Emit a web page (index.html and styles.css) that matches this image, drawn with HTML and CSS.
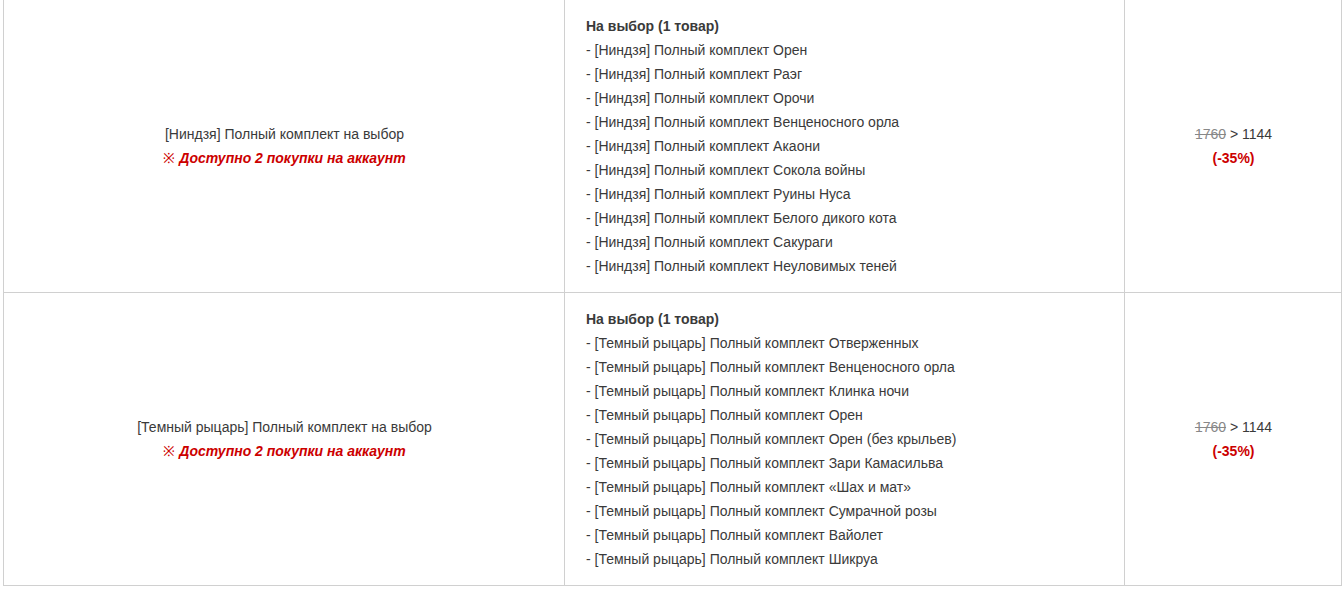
FILE: index.html
```html
<!DOCTYPE html>
<html lang="ru">
<head>
<meta charset="utf-8">
<link rel="stylesheet" href="styles.css">
</head>
<body>
<table class="goods">
  <colgroup>
    <col class="c-name">
    <col class="c-items">
    <col class="c-price">
  </colgroup>
  <tr>
    <td class="name">
      [Ниндзя] Полный комплект на выбор<br>
      <span class="note">※ <em>Доступно 2 покупки на аккаунт</em></span>
    </td>
    <td class="items">
      <strong>На выбор (1 товар)</strong><br>
      - [Ниндзя] Полный комплект Орен<br>
      - [Ниндзя] Полный комплект Раэг<br>
      - [Ниндзя] Полный комплект Орочи<br>
      - [Ниндзя] Полный комплект Венценосного орла<br>
      - [Ниндзя] Полный комплект Акаони<br>
      - [Ниндзя] Полный комплект Сокола войны<br>
      - [Ниндзя] Полный комплект Руины Нуса<br>
      - [Ниндзя] Полный комплект Белого дикого кота<br>
      - [Ниндзя] Полный комплект Сакураги<br>
      - [Ниндзя] Полный комплект Неуловимых теней
    </td>
    <td class="price">
      <s class="old">1760</s> &gt; 1144<br>
      <span class="disc">(-35%)</span>
    </td>
  </tr>
  <tr>
    <td class="name">
      [Темный рыцарь] Полный комплект на выбор<br>
      <span class="note">※ <em>Доступно 2 покупки на аккаунт</em></span>
    </td>
    <td class="items">
      <strong>На выбор (1 товар)</strong><br>
      - [Темный рыцарь] Полный комплект Отверженных<br>
      - [Темный рыцарь] Полный комплект Венценосного орла<br>
      - [Темный рыцарь] Полный комплект Клинка ночи<br>
      - [Темный рыцарь] Полный комплект Орен<br>
      - [Темный рыцарь] Полный комплект Орен (без крыльев)<br>
      - [Темный рыцарь] Полный комплект Зари Камасильва<br>
      - [Темный рыцарь] Полный комплект «Шах и мат»<br>
      - [Темный рыцарь] Полный комплект Сумрачной розы<br>
      - [Темный рыцарь] Полный комплект Вайолет<br>
      - [Темный рыцарь] Полный комплект Шикруа
    </td>
    <td class="price">
      <s class="old">1760</s> &gt; 1144<br>
      <span class="disc">(-35%)</span>
    </td>
  </tr>
</table>
</body>
</html>
```

FILE: styles.css
```css
html, body {
  margin: 0;
  padding: 0;
  background: #fff;
}
body {
  font-family: "Liberation Sans", Arial, sans-serif;
  font-size: 14px;
  line-height: 24px;
  color: #3a3a3a;
}
.goods {
  border-collapse: collapse;
  table-layout: fixed;
  width: 1338px;
  margin: -1px 0 0 3px;
}
.c-name { width: 561px; }
.c-items { width: 560px; }
.c-price { width: 217px; }
.goods td {
  border: 1px solid #d0d0d0;
  padding: 14px 20px 14px 21px;
  vertical-align: middle;
}
.name, .price {
  text-align: center;
}
.items {
  text-align: left;
}
.note {
  color: #c00;
}
.note em {
  font-weight: bold;
  font-style: italic;
}
.old {
  color: #888;
}
.disc {
  color: #c00;
  font-weight: bold;
}
strong {
  font-weight: bold;
}
```
